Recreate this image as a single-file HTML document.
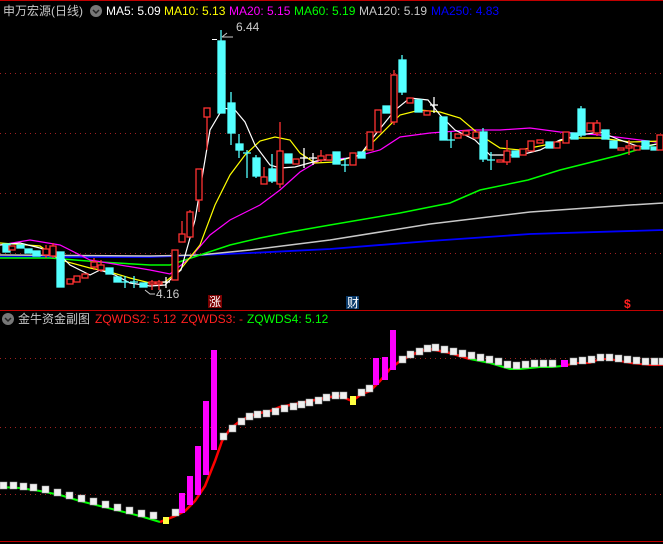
<!DOCTYPE html>
<html><head><meta charset="utf-8"><style>
html,body{margin:0;padding:0;background:#000;width:663px;height:544px;overflow:hidden}
svg{display:block}
text{font-family:"Liberation Sans","Noto Sans CJK SC",sans-serif;font-size:12px}
</style></head><body>
<svg width="663" height="544" viewBox="0 0 663 544" xmlns="http://www.w3.org/2000/svg">
<rect width="663" height="544" fill="#000"/>
<line x1="0" y1="0.5" x2="663" y2="0.5" stroke="#c00000"/>
<!-- grid -->
<g stroke="#a02020" stroke-dasharray="1,4">
<line x1="0" y1="73.5" x2="663" y2="73.5"/><line x1="0" y1="133.5" x2="663" y2="133.5"/>
<line x1="0" y1="193.5" x2="663" y2="193.5"/><line x1="0" y1="253.5" x2="663" y2="253.5"/>
<line x1="0" y1="358.5" x2="663" y2="358.5"/><line x1="0" y1="427.5" x2="663" y2="427.5"/>
<line x1="0" y1="494.5" x2="663" y2="494.5"/>
</g>
<line x1="0" y1="310.5" x2="663" y2="310.5" stroke="#c00000"/>
<line x1="0" y1="541.5" x2="663" y2="541.5" stroke="#c00000"/>
<!-- header -->
<text x="3" y="15" fill="#c8c8c8">申万宏源(日线)</text>
<circle cx="96" cy="11" r="6" fill="#777"/><path d="M93 10 L96 13 L99 10" stroke="#222" stroke-width="1.5" fill="none"/>
<text x="106" y="15" fill="#fff">MA5: 5.09</text>
<text x="164" y="15" fill="#ffff00">MA10: 5.13</text>
<text x="229" y="15" fill="#ff00ff">MA20: 5.15</text>
<text x="294" y="15" fill="#00ff00">MA60: 5.19</text>
<text x="359" y="15" fill="#c8c8c8">MA120: 5.19</text>
<text x="431" y="15" fill="#0000ff">MA250: 4.83</text>
<!-- MAs -->
<g fill="none" stroke-width="1.2">
<polyline stroke="#0000ff" stroke-width="1.8" points="0,257 150,257 250,253 330,249 430,241 530,234 663,230"/>
<polyline stroke="#c8c8c8" stroke-width="1.5" points="0,255 150,256 200,255 250,250 330,240 430,224 530,212 630,205 663,203"/>
<polyline stroke="#00ff00" stroke-width="1.5" points="0,258 50,258 100,262 150,265 170,265 200,255 230,245 260,238 290,232 330,225 400,213 450,203 480,190 528,180 560,170 620,155 663,142"/>
<polyline stroke="#ff00ff" points="0,245 30,240 60,245 90,260 120,265 150,270 170,274 190,258 210,235 230,220 260,205 280,190 300,172 320,160 350,158 380,150 400,137 430,133 470,130 500,130 530,128 560,132 600,135 640,140 663,143"/>
<polyline stroke="#ffff00" points="0,243 40,246 60,260 90,268 110,272 130,278 150,283 165,282 180,270 200,245 215,205 230,175 245,155 260,141 275,137 290,140 300,153 315,163 335,162 360,155 380,135 400,115 420,110 440,112 460,118 480,135 500,148 520,150 545,145 570,138 600,138 630,142 663,141"/>
<polyline stroke="#fff" points="0,245 20,243 40,248 60,255 70,265 90,275 100,270 115,275 130,283 150,286 165,285 175,275 181,270 195,220 210,130 223,108 235,110 245,122 255,145 270,165 280,168 295,167 320,160 340,160 360,155 375,135 395,110 410,98 428,100 440,115 455,130 475,140 490,155 505,155 520,155 540,150 560,140 580,135 600,132 620,140 640,147 663,143"/>
</g>
<!-- candles -->
<g stroke-width="1.3">
<g stroke="#54ffff" fill="#54ffff">
<rect x="3" y="244" width="7" height="8"/><rect x="17" y="245" width="7" height="3"/><rect x="25" y="249" width="7" height="4"/><rect x="33" y="251" width="7" height="5"/>
<rect x="57" y="252" width="7" height="35"/><rect x="106" y="268" width="7" height="6"/><rect x="114" y="277" width="7" height="5"/><rect x="140" y="283" width="7" height="4"/>
<line x1="221" y1="30" x2="221" y2="113"/><rect x="218" y="41" width="7" height="72"/>
<line x1="231" y1="92" x2="231" y2="145"/><rect x="228" y="103" width="7" height="30"/>
<line x1="239" y1="134" x2="239" y2="158"/><rect x="236" y="144" width="7" height="6"/>
<line x1="247" y1="150" x2="247" y2="178"/><line x1="243" y1="153" x2="251" y2="153"/>
<line x1="256" y1="155" x2="256" y2="178"/><rect x="253" y="158" width="7" height="18"/>
<line x1="272" y1="154" x2="272" y2="183"/><rect x="269" y="169" width="7" height="12"/>
<rect x="285" y="154" width="7" height="9"/><rect x="333" y="152" width="7" height="12"/>
<line x1="345" y1="158" x2="345" y2="172"/><line x1="341" y1="165" x2="349" y2="165"/>
<rect x="358" y="152" width="7" height="6"/><rect x="383" y="106" width="7" height="7"/>
<line x1="402" y1="55" x2="402" y2="95"/><rect x="399" y="60" width="7" height="32"/>
<rect x="415" y="100" width="7" height="12"/><rect x="440" y="117" width="7" height="23"/>
<line x1="451" y1="132" x2="451" y2="148"/><line x1="447" y1="140" x2="455" y2="140"/>
<line x1="483" y1="128" x2="483" y2="162"/><rect x="480" y="132" width="7" height="27"/>
<line x1="491" y1="152" x2="491" y2="170"/><line x1="487" y1="160" x2="495" y2="160"/>
<rect x="512" y="151" width="7" height="6"/><rect x="546" y="142" width="7" height="6"/>
<rect x="571" y="133" width="7" height="6"/><line x1="581" y1="106" x2="581" y2="137"/><rect x="578" y="109" width="7" height="26"/>
<rect x="602" y="130" width="7" height="9"/><rect x="610" y="141" width="7" height="7"/>
<rect x="642" y="141" width="7" height="8"/><rect x="651" y="147" width="7" height="3"/>
</g>
<g stroke="#fff"><line x1="166" y1="277" x2="166" y2="288"/><line x1="162" y1="282" x2="170" y2="282"/>
<line x1="304" y1="148" x2="304" y2="168"/><line x1="300" y1="158" x2="308" y2="158"/>
<line x1="313" y1="153" x2="313" y2="165"/><line x1="309" y1="158" x2="317" y2="158"/>
<line x1="434" y1="97" x2="434" y2="113"/><line x1="430" y1="105" x2="438" y2="105"/></g>
<g stroke="#54ffff"><line x1="125" y1="276" x2="125" y2="288"/><line x1="121" y1="282" x2="129" y2="282"/>
<line x1="134" y1="276" x2="134" y2="288"/><line x1="130" y1="282" x2="138" y2="282"/></g>
<g stroke="#ff3232" fill="#000">
<rect x="9" y="246" width="6" height="4"/><line x1="46" y1="245" x2="46" y2="258"/><rect x="43" y="249" width="6" height="6"/>
<line x1="53" y1="243" x2="53" y2="258"/><rect x="50" y="246" width="6" height="10"/>
<rect x="67" y="279" width="6" height="5"/><rect x="74" y="276" width="6" height="6"/><rect x="82" y="274" width="6" height="4"/>
<line x1="94" y1="258" x2="94" y2="270"/><rect x="91" y="262" width="6" height="5"/><line x1="101" y1="260" x2="101" y2="272"/><rect x="98" y="265" width="6" height="5"/>
<line x1="152" y1="280" x2="152" y2="290"/><rect x="149" y="282" width="6" height="2"/><line x1="159" y1="280" x2="159" y2="290"/><rect x="156" y="282" width="6" height="2"/>
<rect x="172" y="250" width="6" height="30"/><line x1="182" y1="221" x2="182" y2="242"/><rect x="179" y="234" width="6" height="8"/>
<line x1="190" y1="210" x2="190" y2="237"/><rect x="187" y="212" width="6" height="25"/>
<line x1="199" y1="169" x2="199" y2="212"/><rect x="196" y="169" width="6" height="31"/>
<line x1="207" y1="108" x2="207" y2="150"/><rect x="204" y="108" width="6" height="9"/>
<line x1="264" y1="167" x2="264" y2="184"/><rect x="261" y="177" width="6" height="7"/>
<line x1="280" y1="122" x2="280" y2="188"/><rect x="277" y="151" width="6" height="33"/>
<rect x="293" y="159" width="6" height="5"/><line x1="321" y1="150" x2="321" y2="162"/><rect x="318" y="156" width="6" height="4"/><rect x="326" y="155" width="6" height="5"/>
<rect x="350" y="153" width="6" height="12"/><rect x="367" y="132" width="6" height="18"/><rect x="375" y="110" width="6" height="22"/>
<line x1="394" y1="70" x2="394" y2="125"/><rect x="391" y="75" width="6" height="47"/>
<rect x="407" y="98" width="6" height="5"/><rect x="424" y="111" width="6" height="4"/>
<rect x="455" y="134" width="6" height="4"/><rect x="463" y="131" width="6" height="4"/><rect x="473" y="132" width="6" height="6"/>
<rect x="497" y="160" width="6" height="2"/><line x1="507" y1="140" x2="507" y2="165"/><rect x="504" y="151" width="6" height="11"/>
<rect x="520" y="149" width="6" height="6"/><rect x="528" y="141" width="6" height="10"/><rect x="537" y="140" width="6" height="3"/>
<rect x="554" y="142" width="6" height="6"/><rect x="563" y="132" width="6" height="11"/>
<rect x="587" y="123" width="6" height="8"/><line x1="597" y1="120" x2="597" y2="136"/><rect x="594" y="123" width="6" height="10"/>
<rect x="618" y="148" width="6" height="2"/><line x1="629" y1="140" x2="629" y2="155"/><rect x="626" y="146" width="6" height="2"/><rect x="634" y="146" width="6" height="4"/>
<rect x="657" y="135" width="6" height="15"/>
</g>
</g>
<!-- labels -->
<line x1="212" y1="39.5" x2="217" y2="39.5" stroke="#fff"/>
<path d="M222 37 L227 33 M222 37 L233 37" stroke="#ccc" fill="none"/>
<text x="236" y="31" fill="#ccc">6.44</text>
<path d="M145 290 L150 294 L155 294" stroke="#ccc" fill="none"/>
<text x="156" y="298" fill="#ccc">4.16</text>
<rect x="208" y="295" width="14" height="13" fill="#7a0000"/><text x="209" y="306" fill="#fff" font-size="11">涨</text>
<rect x="346" y="296" width="13" height="13" fill="#0a3a6a"/><text x="347" y="307" fill="#fff" font-size="11">财</text>
<text x="624" y="308" fill="#ff2020" font-size="12" font-weight="bold">$</text>
<!-- sub header -->
<circle cx="8" cy="319" r="6" fill="#777"/><path d="M5 318 L8 321 L11 318" stroke="#222" stroke-width="1.5" fill="none"/>
<text x="18" y="323" fill="#c8c8c8">金牛资金副图</text>
<text x="95" y="323" fill="#ff2020">ZQWDS2: 5.12</text>
<text x="181" y="323" fill="#ff2020">ZQWDS3: -</text>
<text x="247" y="323" fill="#00ff00">ZQWDS4: 5.12</text>
<!-- sub chart line -->
<polyline fill="none" stroke="#00ff00" stroke-width="2" points="0,487 20,488 40,491 60,495 80,501 100,506 120,511 140,516 160,522"/>
<polyline fill="none" stroke="#ff0000" stroke-width="2.5" points="160,522 175,516 185,511 195,501 205,486 215,461 222,441 230,429 240,421 250,416 260,413 270,411 280,407 290,405 300,403 310,401 320,399 330,397 340,396 352,401 362,394 370,391 380,381 390,369 400,361 410,356 420,351 430,349 440,351 450,353 460,356 470,359"/>
<polyline fill="none" stroke="#00ff00" stroke-width="2" points="470,359 480,361 490,363 500,366 510,369 520,369 530,368 540,367 552,367 562,366"/>
<polyline fill="none" stroke="#ff0000" stroke-width="2" points="562,366 577,363 590,363 600,359 610,359 620,361 630,363 640,364 650,365 663,365"/>
<g fill="#ff00ff">
<rect x="179" y="493" width="6" height="20"/><rect x="187" y="476" width="6" height="29"/><rect x="195" y="446" width="6" height="49"/><rect x="203" y="401" width="6" height="74"/><rect x="211" y="350" width="6" height="100"/>
<rect x="373" y="358" width="6" height="27"/><rect x="382" y="357" width="6" height="23"/><rect x="390" y="330" width="6" height="40"/>
</g>
<g fill="#f0f0f0" stroke="#999" stroke-width="0.5">
<rect x="0" y="482" width="7" height="7"/><rect x="10" y="482" width="7" height="7"/><rect x="20" y="483" width="7" height="7"/><rect x="30" y="484" width="7" height="7"/><rect x="42" y="486" width="7" height="7"/><rect x="54" y="489" width="7" height="7"/>
<rect x="66" y="492" width="7" height="7"/><rect x="78" y="495" width="7" height="7"/><rect x="90" y="498" width="7" height="7"/><rect x="102" y="501" width="7" height="7"/><rect x="114" y="504" width="7" height="7"/><rect x="126" y="507" width="7" height="7"/>
<rect x="138" y="510" width="7" height="7"/><rect x="150" y="512" width="7" height="7"/><rect x="172" y="509" width="7" height="7"/>
<rect x="220" y="433" width="7" height="7"/><rect x="229" y="425" width="7" height="7"/><rect x="238" y="418" width="7" height="7"/><rect x="246" y="413" width="7" height="7"/><rect x="254" y="411" width="7" height="7"/><rect x="263" y="410" width="7" height="7"/>
<rect x="272" y="408" width="7" height="7"/><rect x="281" y="405" width="7" height="7"/><rect x="290" y="403" width="7" height="7"/><rect x="298" y="401" width="7" height="7"/><rect x="306" y="399" width="7" height="7"/><rect x="315" y="397" width="7" height="7"/>
<rect x="323" y="394" width="7" height="7"/><rect x="332" y="392" width="7" height="7"/><rect x="340" y="392" width="7" height="7"/><rect x="358" y="389" width="7" height="7"/><rect x="366" y="385" width="7" height="7"/>
<rect x="399" y="356" width="7" height="7"/><rect x="407" y="351" width="7" height="7"/><rect x="416" y="348" width="7" height="7"/><rect x="424" y="345" width="7" height="7"/><rect x="432" y="344" width="7" height="7"/><rect x="441" y="346" width="7" height="7"/>
<rect x="450" y="348" width="7" height="7"/><rect x="459" y="350" width="7" height="7"/><rect x="468" y="352" width="7" height="7"/><rect x="477" y="354" width="7" height="7"/><rect x="486" y="356" width="7" height="7"/><rect x="495" y="358" width="7" height="7"/>
<rect x="504" y="361" width="7" height="7"/><rect x="513" y="362" width="7" height="7"/><rect x="522" y="361" width="7" height="7"/><rect x="531" y="360" width="7" height="7"/><rect x="540" y="360" width="7" height="7"/><rect x="549" y="360" width="7" height="7"/>
<rect x="570" y="358" width="7" height="7"/><rect x="579" y="357" width="7" height="7"/><rect x="588" y="356" width="7" height="7"/><rect x="597" y="354" width="7" height="7"/><rect x="606" y="354" width="7" height="7"/><rect x="615" y="355" width="7" height="7"/>
<rect x="624" y="356" width="7" height="7"/><rect x="633" y="357" width="7" height="7"/><rect x="642" y="358" width="7" height="7"/><rect x="651" y="358" width="7" height="7"/><rect x="659" y="358" width="7" height="7"/>
</g>
<rect x="163" y="517" width="6" height="7" fill="#ffff40"/>
<rect x="350" y="396" width="6" height="9" fill="#ffff40"/>
<rect x="561" y="360" width="7" height="7" fill="#ff00ff"/>
</svg>
</body></html>
